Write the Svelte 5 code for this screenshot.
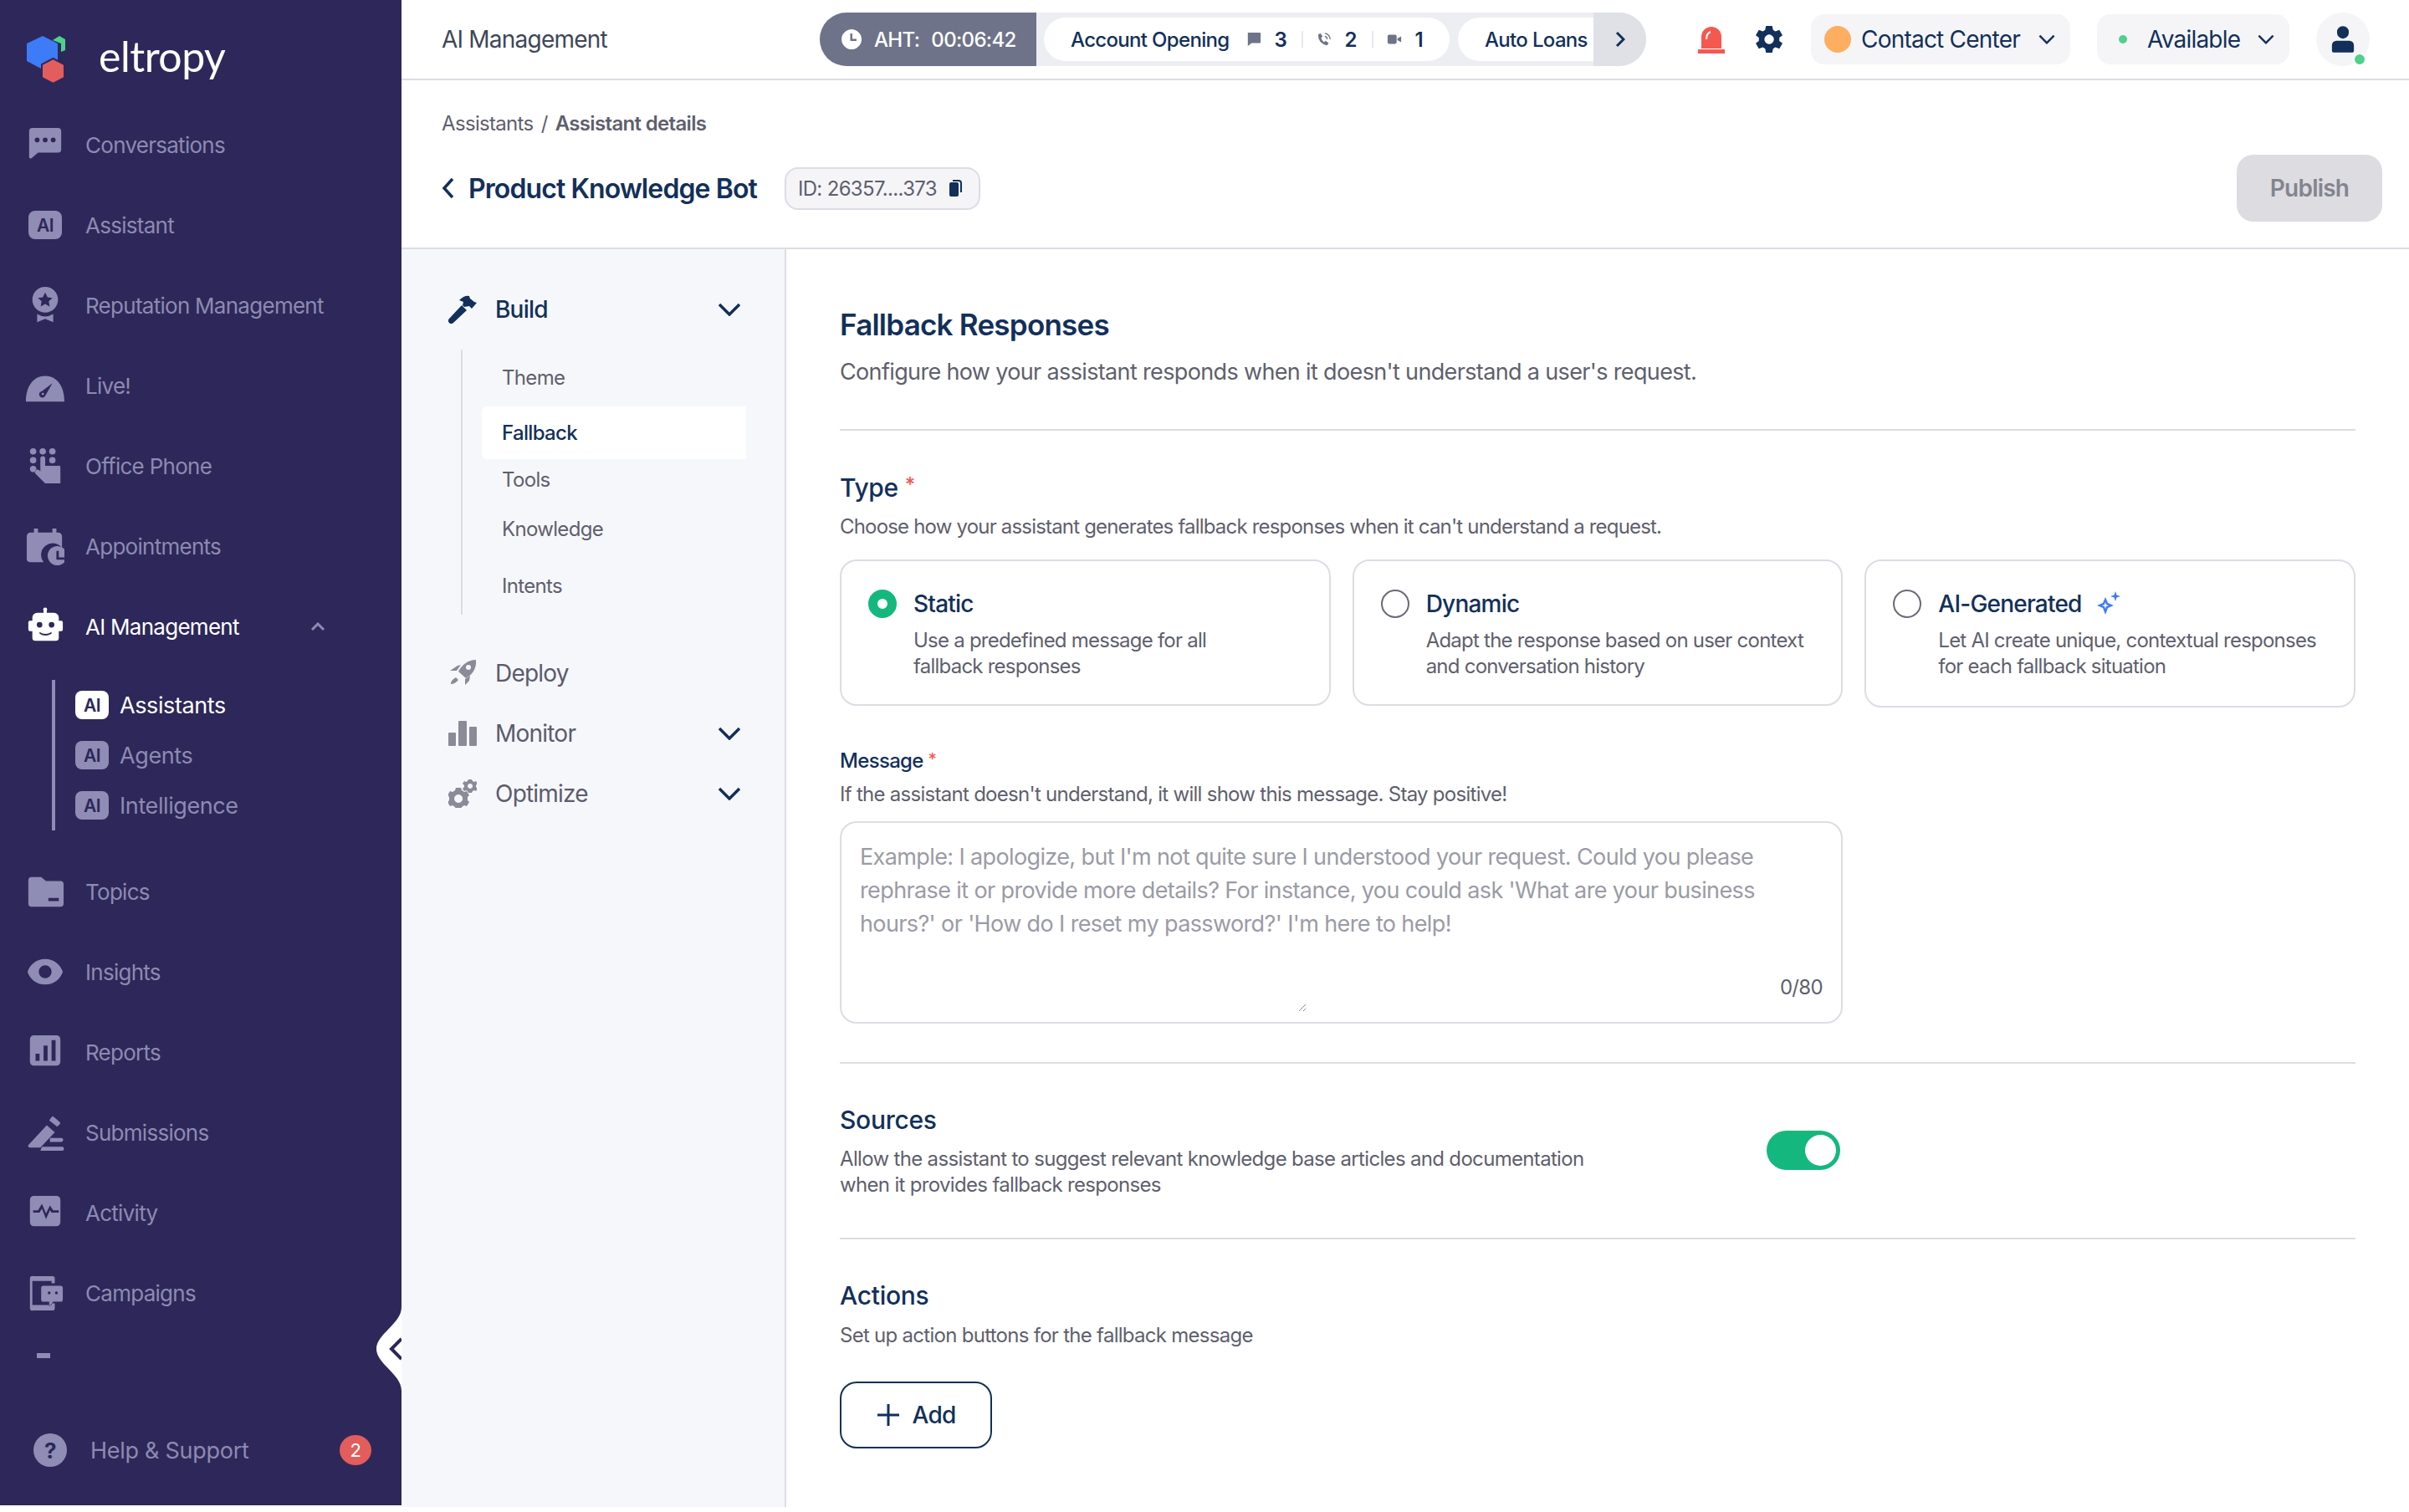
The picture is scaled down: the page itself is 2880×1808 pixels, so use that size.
<script>
  const circ = (x, y, r) => `M${x - r} ${y}a${r} ${r} 0 1 0 ${r * 2} 0a${r} ${r} 0 1 0 ${-r * 2} 0z`;

  const icons = {
    chat: `M8 3h32a4 4 0 0 1 4 4v23a4 4 0 0 1-4 4H15l-8 7a2 2 0 0 1-3-2V7a4 4 0 0 1 4-4z${circ(14, 18, 3)}${circ(24, 18, 3)}${circ(34, 18, 3)}`,
    award: `${circ(24, 17, 16)}M24 8l3 6 6 .8-4.500 4.300 1.100 6.400L24 22.500l-5.600 3 1.100-6.400-4.500-4.300 6-.8z M14 35q10 6 20 0v10l-10-4-10 4z`,
    live: `M0 44C0 24 10 12 24 12s24 12 24 32z M33 21L20 31a4 4 0 0 0-3 6 4 4 0 0 0 7 0zM21 33a1.500 1.500 0 1 0 .1 0z`,
    phone: `${circ(9, 6, 4)}${circ(21, 6, 4)}${circ(33, 6, 4)}${circ(9, 17, 4)}${circ(33, 17, 4)}${circ(9, 28, 4)}M18 15a3 3 0 0 1 6 0v9h16a2 2 0 0 1 3 2v20H24L12 34a3 3 0 0 1 5-4l1 1z`,
    calendar: `M8 7h2V2h5v5h18V2h5v5h2a5 5 0 0 1 5 5v14a14 14 0 0 0-23 18H5a4 4 0 0 1-4-4V12a5 5 0 0 1 5-5z M39 24a12 12 0 1 0 .1 0z M38 30h3v8h7v3H38z`,
    robot: `M22 2h4v5h9a6 6 0 0 1 6 6v4h3a2 2 0 0 1 2 2v9a2 2 0 0 1-2 2h-3v8a4 4 0 0 1-4 4H12a4 4 0 0 1-4-4v-8H5a2 2 0 0 1-2-2v-9a2 2 0 0 1 2-2h3v-4a6 6 0 0 1 6-6h8z${circ(17, 22, 3.500)}${circ(32, 22, 3.500)}M17 31q7 5 15 0v2q-8 5-15 0z`,
    folder: `M7 6h12l6 5h18a4 4 0 0 1 4 4v24a4 4 0 0 1-4 4H7a4 4 0 0 1-4-4V10a4 4 0 0 1 4-4z M28 32v4h13v-4z`,
    eye: `M24 8c11 0 19 7 22 16-3 9-11 16-22 16S5 33 2 24C5 15 13 8 24 8z${circ(24, 24, 8)}`,
    reports: `M10 3h28a5 5 0 0 1 5 5v28a5 5 0 0 1-5 5H10a5 5 0 0 1-5-5V8a5 5 0 0 1 5-5z M12 26v9h5v-9z M22 16v19h5V16z M32 9v26h5V9z`,
    gavel: `M26 15l10 9-18 19H5a2 2 0 0 1-2-3z M29 9l3-4a2 2 0 0 1 3 0l7 6a2 2 0 0 1 0 3l-3 3z M30 31h14a2.500 2.500 0 0 1 0 5H30z M20 42h25a2.500 2.500 0 0 1 0 5H18z`,
    pulse: `M10 3h28a5 5 0 0 1 5 5v28a5 5 0 0 1-5 5H10a5 5 0 0 1-5-5V8a5 5 0 0 1 5-5z M9 21v3h8l3-5 5 13 5-11 2 3h9v-3h-7l-4-6-5 10-5-12-5 8z`,
    campaign: `M9 3h24a3 3 0 0 1 3 3v6h-4V9H8v30h24v-2h4v6a3 3 0 0 1-3 3H9a3 3 0 0 1-4-3V6a3 3 0 0 1 4-3z M22 15h21a3 3 0 0 1 3 3v14a3 3 0 0 1-3 3h-9l-5 6v-6h-7a3 3 0 0 1-3-3V18a3 3 0 0 1 3-3z${circ(29, 24, 1.800)}${circ(38, 24, 1.800)}`
  };

  const nav_top = [
    { label: "Conversations", icon: "chat" },
    { label: "Assistant", badge: true },
    { label: "Reputation Management", icon: "award" },
    { label: "Live!", icon: "live" },
    { label: "Office Phone", icon: "phone" },
    { label: "Appointments", icon: "calendar" }
  ];
  const nav_sub = [
    { label: "Assistants", active: true },
    { label: "Agents" },
    { label: "Intelligence" }
  ];
  const nav_bottom = [
    { label: "Topics", icon: "folder" },
    { label: "Insights", icon: "eye" },
    { label: "Reports", icon: "reports" },
    { label: "Submissions", icon: "gavel" },
    { label: "Activity", icon: "pulse" },
    { label: "Campaigns", icon: "campaign" }
  ];

  const build_items = [
    { label: "Theme", cls: "theme" },
    { label: "Fallback", cls: "fallback" },
    { label: "Tools", cls: "tools" },
    { label: "Knowledge", cls: "knowledge" },
    { label: "Intents", cls: "intents" }
  ];

  const types = [
    { title: "Static", lines: ["Use a predefined message for all", "fallback responses"], selected: true },
    { title: "Dynamic", lines: ["Adapt the response based on user context", "and conversation history"] },
    { title: "AI-Generated", lines: ["Let AI create unique, contextual responses", "for each fallback situation"], spark: true }
  ];

  const placeholder = [
    "Example: I apologize, but I'm not quite sure I understood your request. Could you please",
    "rephrase it or provide more details? For instance, you could ask 'What are your business",
    "hours?' or 'How do I reset my password?' I'm here to help!"
  ];
</script>

{#snippet chevron(cls)}
  <svg class={cls} viewBox="0 0 28 16" fill="none"><path d="M2 2l12 12L26 2" /></svg>
{/snippet}

<div class="app">
  <aside class="sidebar">
    <div class="logo">
      <svg class="logo-mark" viewBox="0 0 46 57">
        <path d="M31 5l8-5 7 4v13l-5 2V9z" fill="#4fd08c" />
        <path d="M19 0l18 9v21L19 40 0 30V9z" fill="#3d7bf7" />
        <path d="M31.500 27L45 34v16l-13.500 7L18 50V34z" fill="#e25d5b" stroke="#2d2859" stroke-width="2" />
      </svg>
      <span class="logo-text">eltropy</span>
    </div>

    {#each nav_top as item}
      <div class="nav-item">
        <span class="nav-icon">
          {#if item.badge}
            <span class="ai-badge">AI</span>
          {:else}
            <svg viewBox="0 0 48 48"><path fill-rule="evenodd" d={icons[item.icon]} /></svg>
          {/if}
        </span>
        <span>{item.label}</span>
      </div>
    {/each}

    <div class="nav-item open">
      <span class="nav-icon">
        <svg viewBox="0 0 48 48"><circle cx="24" cy="3" r="2.500" /><path fill-rule="evenodd" d={icons.robot} /></svg>
      </span>
      <span>AI Management</span>
      <svg class="caret-up" viewBox="0 0 18 10" fill="none"><path d="M2 9l7-7 7 7" /></svg>
    </div>

    <div class="subnav">
      {#each nav_sub as item}
        <div class="sub-item" class:active={item.active}>
          <span class="ai-badge">AI</span>
          <span class="sub-label">{item.label}</span>
        </div>
      {/each}
    </div>

    {#each nav_bottom as item}
      <div class="nav-item">
        <span class="nav-icon">
          <svg viewBox="0 0 48 48"><path fill-rule="evenodd" d={icons[item.icon]} /></svg>
        </span>
        <span>{item.label}</span>
      </div>
    {/each}

    <div class="dash"></div>

    <div class="help">
      <span class="help-icon">?</span>
      <span class="help-label">Help &amp; Support</span>
      <span class="count">2</span>
    </div>

    <svg class="collapse" viewBox="0 0 30 100">
      <path d="M30 0C30 20 0 32 0 50s30 30 30 50z" fill="#fff" />
      <path d="M30 38L18 50l12 12" fill="none" stroke="#2d2859" stroke-width="4" />
    </svg>
  </aside>

  <main class="main">
    <header class="topbar">
      <div class="top-title">AI Management</div>

      <div class="queue">
        <div class="aht">
          <svg viewBox="0 0 24 24"><path fill-rule="evenodd" d="M12 0a12 12 0 1 0 .1 0z M10.500 5v9H18v-2.500h-5V5z" /></svg>
          <span>AHT:</span>
          <span>00:06:42</span>
        </div>
        <div class="queue-items">
          <div class="chip">
            <span class="chip-name">Account Opening</span>
            <svg class="mini" viewBox="0 0 20 20"><path d="M2 1h16a1 1 0 0 1 1 1v12a1 1 0 0 1-1 1H7l-5 4z" /></svg>
            <b>3</b>
            <i></i>
            <svg class="mini" viewBox="0 0 20 20"><path d="M5 2l3 4-2 2q1 4 4 6l2-2 4 3-2 3Q2 16 2 4z" /><path d="M11 2a8 8 0 0 1 7 8M11 6a4 4 0 0 1 3 4" fill="none" stroke="#6f7389" stroke-width="1.500" /></svg>
            <b>2</b>
            <i></i>
            <svg class="mini" viewBox="0 0 20 20"><rect x="1" y="4" width="12" height="12" rx="2" /><path d="M14 9l5-3v8l-5-3z" /></svg>
            <b>1</b>
          </div>
          <div class="chip clipped"><span class="chip-name">Auto Loans</span></div>
        </div>
        <div class="queue-next">
          <svg viewBox="0 0 12 20" fill="none"><path d="M2 2l8 8-8 8" /></svg>
        </div>
      </div>

      <svg class="alarm" viewBox="0 0 34 34">
        <path d="M5 28V14a12 12 0 0 1 24 0v14z" fill="#f4594f" />
        <rect x="1" y="29" width="32" height="5" fill="#f4594f" />
        <path d="M11 17q0-7 5-9" fill="none" stroke="#fff" stroke-width="2" />
      </svg>
      <svg class="gear" viewBox="0 0 34 34">
        <path fill-rule="evenodd" d="M13 0h8l1 5 3 2 5-2 4 7-4 3v4l4 3-4 7-5-2-3 2-1 5h-8l-1-5-3-2-5 2-4-7 4-3v-4l-4-3 4-7 5 2 3-2z M17 11a6 6 0 1 0 .1 0z" />
      </svg>

      <div class="select contact">
        <span class="org-dot"></span>
        <span>Contact Center</span>
        {@render chevron("sel-chev")}
      </div>
      <div class="select available">
        <span class="status-dot"></span>
        <span>Available</span>
        {@render chevron("sel-chev")}
      </div>

      <div class="avatar">
        <svg viewBox="0 0 32 36"><path fill-rule="evenodd" d="M16 0a8 8 0 0 1 8 9 8 8 0 0 1-16 0 8 8 0 0 1 8-9z M7 20h18a6 6 0 0 1 6 6v7a3 3 0 0 1-3 3H4a3 3 0 0 1-3-3v-7a6 6 0 0 1 6-6z" /></svg>
        <span class="avatar-dot"></span>
      </div>
    </header>

    <section class="page-head">
      <div class="crumbs">Assistants <span class="slash">/</span> <b>Assistant details</b></div>
      <div class="title-row">
        <svg class="back" viewBox="0 0 16 26" fill="none"><path d="M13 2L3 13l10 11" /></svg>
        <h1>Product Knowledge Bot</h1>
        <div class="id-chip">
          <span>ID: 26357....373</span>
          <svg viewBox="0 0 16 20"><path d="M1 5a2 2 0 0 1 2-2h7a2 2 0 0 1 2 2v13a2 2 0 0 1-2 2H3a2 2 0 0 1-2-2z" /><path d="M5 0h7a4 4 0 0 1 4 4v11h-2V4a2 2 0 0 0-2-2H5z" /></svg>
        </div>
        <button class="publish">Publish</button>
      </div>
    </section>

    <div class="body">
      <nav class="panel">
        <div class="panel-row build">
          <svg class="panel-icon" viewBox="0 0 34 34"><path d="M16 12l6 6L6 33a3 3 0 0 1-5-5z" /><path d="M13 6q6-6 12-5l1 3 5 4 3 1-6 7-3-3-6 1-2-2 1-4z" /></svg>
          <span>Build</span>
          {@render chevron("panel-chev")}
        </div>
        <div class="build-list">
          {#each build_items as item}
            <div class="build-item {item.cls}">{item.label}</div>
          {/each}
        </div>
        <div class="panel-row deploy">
          <svg class="panel-icon" viewBox="0 0 34 34"><path d="M33 1c1 11-5 18-12 22l-9-8C16 7 24 1 33 1z" /><circle cx="24" cy="10" r="3" fill="#f6f7fa" /><path d="M11 8l4-1-5 7H2zM20 24l6-4-1 6-5 5zM9 22l3 3q-4 5-9 5q0-5 6-8z" /></svg>
          <span>Deploy</span>
        </div>
        <div class="panel-row">
          <svg class="panel-icon" viewBox="0 0 34 34"><rect x="0" y="16" width="9" height="16" rx="1" /><rect x="12" y="2" width="10" height="30" rx="1" /><rect x="25" y="9" width="9" height="23" rx="1" /></svg>
          <span>Monitor</span>
          {@render chevron("panel-chev")}
        </div>
        <div class="panel-row">
          <svg class="panel-icon" viewBox="0 0 34 34"><path fill-rule="evenodd" d="M9 10h6l1 3 3 2 3-1 3 5-2 2v4l2 2-3 5-3-1-3 2-1 3H9l-1-3-3-2-3 1-3-5 2-2v-4l-2-2 3-5 3 1 3-2z M12 18a5 5 0 1 0 .1 0z" /><path fill-rule="evenodd" d="M24 0h4l1 2 2 1 2-1 2 3-2 2v2l2 2-2 3-2-1-2 1-1 2h-4l-1-2-2-1-2 1-2-3 2-2V7l-2-2 2-3 2 1 2-1z M26 5a3 3 0 1 0 .1 0z" /></svg>
          <span>Optimize</span>
          {@render chevron("panel-chev")}
        </div>
      </nav>

      <div class="content">
        <h2>Fallback Responses</h2>
        <p class="lead">Configure how your assistant responds when it doesn't understand a user's request.</p>
        <hr />

        <h3 class="type-h">Type <span class="req">*</span></h3>
        <p class="desc type-desc choose">Choose how your assistant generates fallback responses when it can't understand a request.</p>

        <div class="cards">
          {#each types as t}
            <div class="card" class:tall={t.spark}>
              <span class="radio" class:selected={t.selected}></span>
              <div class="card-text">
                <div class="card-title">
                  {t.title}
                  {#if t.spark}
                    <svg class="spark" viewBox="0 0 30 30"><path fill-rule="evenodd" d="M12 7l3 7 7 3-7 3-3 8-3-8-7-3 7-3z M12 13l-1 3-3 1 3 1 1 3 1-3 3-1-3-1z" /><path d="M24 0l1.500 4.500L30 6l-4.500 1.500L24 12l-1.500-4.500L18 6l4.500-1.500z" /></svg>
                  {/if}
                </div>
                {#each t.lines as line}
                  <div class="card-line">{line}</div>
                {/each}
              </div>
            </div>
          {/each}
        </div>

        <div class="msg-label">Message <span class="req small">*</span></div>
        <p class="desc msg-desc">If the assistant doesn't understand, it will show this message. Stay positive!</p>
        <div class="textarea">
          {#each placeholder as line}
            <div>{line}</div>
          {/each}
          <span class="counter">0/80</span>
          <svg class="grip" viewBox="0 0 10 10" fill="none"><path d="M1 9l8-8M6 9l3-3" /></svg>
        </div>
        <hr class="gap" />

        <div class="sources">
          <div>
            <h3>Sources</h3>
            <p class="desc two-line">Allow the assistant to suggest relevant knowledge base articles and documentation<br />when it provides fallback responses</p>
          </div>
          <span class="toggle"><span></span></span>
        </div>
        <hr class="gap second" />

        <h3 class="actions-h">Actions</h3>
        <p class="desc type-desc actions-desc">Set up action buttons for the fallback message</p>
        <button class="add">
          <svg viewBox="0 0 28 28" fill="none"><path d="M14 1v26M1 14h26" /></svg>
          Add
        </button>
      </div>
    </div>
  </main>
</div>

<style>
  :global(body) {
    margin: 0;
    background: #fff;
  }

  .app * {
    letter-spacing: -0.028em;
  }

  .app {
    display: flex;
    width: 2880px;
    height: 1808px;
    overflow: hidden;
    font-family: Inter, "Liberation Sans", sans-serif;
    color: #12305a;
  }

  .sidebar {
    position: relative;
    flex: none;
    width: 480px;
    height: 1800px;
    background: #2d2859;
    color: #8d8ab2;
    font-size: 26px;
  }

  .logo {
    display: flex;
    align-items: flex-start;
    height: 125px;
    padding: 43px 0 0 32px;
    box-sizing: border-box;
  }

  .logo-mark {
    width: 46px;
    height: 57px;
  }

  .logo-text {
    margin-left: 40px;
    margin-top: -6px;
    font-family: Lato, sans-serif;
    font-size: 50px;
    line-height: 60px;
    font-weight: 400;
    color: #fff;
    letter-spacing: -0.01em;
  }

  .nav-item {
    display: flex;
    align-items: center;
    height: 96px;
    padding-left: 30px;
  }

  .nav-icon {
    display: flex;
    align-items: center;
    justify-content: center;
    width: 48px;
    height: 48px;
    margin-right: 24px;
  }

  .nav-icon svg {
    width: 46px;
    height: 46px;
    fill: #8f8cb5;
  }

  .ai-badge {
    display: flex;
    align-items: center;
    justify-content: center;
    width: 40px;
    height: 34px;
    border-radius: 8px;
    background: #8f8cb5;
    color: #2d2859;
    font-size: 21px;
    font-weight: 600;
  }

  .open {
    color: #fff;
  }

  .open .nav-icon svg {
    fill: #fff;
  }

  .caret-up {
    width: 18px;
    height: 10px;
    margin-left: auto;
    margin-right: 91px;
    stroke: #8d8ab2;
    stroke-width: 3;
  }

  .subnav {
    margin: 16px 0 25px 62px;
    height: 180px;
    padding-left: 24px;
    border-left: 4px solid #8f8cb5;
  }

  .sub-item {
    display: flex;
    align-items: center;
    gap: 13px;
    height: 60px;
    font-size: 27px;
  }

  .sub-label {
    letter-spacing: -0.015em;
  }

  .sub-item.active {
    color: #fff;
  }

  .sub-item.active .ai-badge {
    background: #fff;
  }

  .dash {
    width: 16px;
    height: 6px;
    margin: 24px 0 0 44px;
    background: #8f8cb5;
  }

  .help {
    display: flex;
    align-items: center;
    height: 40px;
    margin-top: 90px;
    padding-left: 40px;
    font-size: 27px;
  }

  .help-label {
    letter-spacing: -0.01em;
  }

  .help-icon {
    display: flex;
    align-items: center;
    justify-content: center;
    width: 40px;
    height: 40px;
    margin-right: 28px;
    border-radius: 50%;
    background: #8f8cb5;
    color: #2d2859;
    font-size: 26px;
    font-weight: 700;
  }

  .count {
    display: flex;
    align-items: center;
    justify-content: center;
    width: 38px;
    height: 36px;
    margin-left: auto;
    margin-right: 36px;
    border-radius: 50%;
    background: #e25d5b;
    color: #fff;
    font-size: 22px;
  }

  .collapse {
    position: absolute;
    right: 0;
    top: 1563px;
    width: 30px;
    height: 100px;
  }

  .main {
    flex: 1;
    min-width: 0;
    display: flex;
    flex-direction: column;
  }

  .topbar {
    display: flex;
    align-items: center;
    flex: none;
    height: 94px;
    border-bottom: 2px solid #dcdce4;
  }

  .top-title {
    width: 500px;
    padding-left: 48px;
    box-sizing: border-box;
    font-size: 28px;
    color: #3e4759;
  }

  .queue {
    display: flex;
    width: 988px;
    height: 64px;
    border-radius: 32px;
    overflow: hidden;
    background: #eceef2;
    font-size: 24px;
    font-weight: 500;
  }

  .aht {
    display: flex;
    align-items: center;
    flex: none;
    width: 259px;
    padding-left: 26px;
    box-sizing: border-box;
    background: #6f7389;
    color: #fff;
  }

  .aht svg {
    width: 24px;
    height: 24px;
    margin-right: 15px;
    fill: #fff;
  }

  .aht span + span {
    margin-left: 14px;
  }

  .queue-items {
    display: flex;
    flex: 1;
    gap: 10px;
    align-items: center;
    padding-left: 9px;
    min-width: 0;
  }

  .chip {
    display: flex;
    align-items: center;
    height: 52px;
    background: #fff;
    border-radius: 26px;
    padding-left: 32px;
    box-sizing: border-box;
    white-space: nowrap;
  }

  .chip:first-child {
    flex: none;
    width: 485px;
  }

  .chip.clipped {
    flex: 1;
    border-radius: 26px 0 0 26px;
  }

  .chip b {
    width: 16px;
    font-weight: 600;
  }

  .chip i {
    width: 2px;
    height: 20px;
    margin: 0 16px;
    background: #e6e7ec;
  }

  .chip-name {
    margin-right: 20px;
  }

  .mini {
    width: 18px;
    height: 18px;
    margin-right: 16px;
    fill: #6f7389;
  }

  .queue-next {
    display: flex;
    align-items: center;
    justify-content: center;
    flex: none;
    width: 63px;
    background: #dfe1e7;
  }

  .queue-next svg {
    width: 12px;
    height: 20px;
    stroke: #12305a;
    stroke-width: 3;
  }

  .alarm {
    width: 34px;
    height: 34px;
    margin-left: 61px;
  }

  .gear {
    width: 32px;
    height: 32px;
    margin-left: 36px;
    fill: #12305a;
  }

  .select {
    display: flex;
    align-items: center;
    height: 60px;
    border-radius: 16px;
    background: #f5f5f8;
    font-size: 28px;
    box-sizing: border-box;
  }

  .contact {
    width: 310px;
    margin-left: 34px;
    padding-left: 16px;
  }

  .org-dot {
    width: 32px;
    height: 32px;
    margin-right: 12px;
    border-radius: 50%;
    background: #fdae61;
  }

  .available {
    width: 230px;
    margin-left: 32px;
    padding-left: 26px;
  }

  .status-dot {
    width: 10px;
    height: 10px;
    margin-right: 24px;
    border-radius: 50%;
    background: #4fd08c;
  }

  .sel-chev {
    width: 20px;
    height: 12px;
    margin-left: auto;
    margin-right: 18px;
    stroke: #12305a;
    stroke-width: 3.500;
  }

  .avatar {
    position: relative;
    display: flex;
    align-items: center;
    justify-content: center;
    width: 64px;
    height: 64px;
    margin-left: 32px;
    border-radius: 50%;
    background: #f5f5f8;
  }

  .avatar svg {
    width: 28px;
    height: 32px;
    fill: #12305a;
  }

  .avatar-dot {
    position: absolute;
    right: 4px;
    bottom: 0;
    width: 12px;
    height: 12px;
    border-radius: 50%;
    background: #4fd08c;
    border: 2px solid #fff;
  }

  .page-head {
    flex: none;
    height: 202px;
    padding: 36px 32px 0 48px;
    box-sizing: border-box;
    border-bottom: 2px solid #dcdce4;
  }

  .crumbs {
    height: 32px;
    line-height: 32px;
    font-size: 24px;
    color: #5f5f6e;
  }

  .crumbs b {
    font-weight: 600;
  }

  .slash {
    margin: 0 3px;
  }

  .title-row {
    display: flex;
    align-items: center;
    height: 80px;
    margin-top: 21px;
  }

  .back {
    width: 16px;
    height: 26px;
    margin-right: 16px;
    stroke: #12305a;
    stroke-width: 3.500;
  }

  .title-row h1 {
    margin: 0;
    font-size: 32px;
    font-weight: 600;
  }

  .id-chip {
    display: flex;
    align-items: center;
    height: 51px;
    margin-left: 33px;
    padding: 0 14px;
    box-sizing: border-box;
    width: 234px;
    background: #f5f5f8;
    border: 2px solid #dcdce4;
    border-radius: 16px;
    font-size: 24px;
    color: #5f5f6e;
  }

  .id-chip svg {
    width: 16px;
    height: 20px;
    margin-left: auto;
    margin-right: 6px;
    fill: #12305a;
  }

  .publish {
    width: 174px;
    height: 80px;
    margin-left: auto;
    border: 0;
    border-radius: 20px;
    background: #dcdce1;
    color: #84848f;
    font: 600 28px Inter, "Liberation Sans", sans-serif;
  }

  .body {
    display: flex;
    flex: 1;
    min-height: 0;
  }

  .panel {
    flex: none;
    width: 460px;
    height: 1504px;
    padding: 44px 52px 0 56px;
    box-sizing: border-box;
    background: #f6f7fa;
    border-right: 2px solid #dcdce4;
  }

  .panel-row {
    display: flex;
    align-items: center;
    height: 72px;
    font-size: 28px;
    color: #5b5b6e;
  }

  .panel-row.build {
    height: 56px;
    color: #12305a;
    font-weight: 500;
  }

  .panel-icon {
    width: 34px;
    height: 34px;
    margin-right: 22px;
    fill: #8b8b98;
  }

  .build .panel-icon {
    fill: #12305a;
  }

  .panel-chev {
    width: 28px;
    height: 16px;
    margin-left: auto;
    stroke: #12305a;
    stroke-width: 3.500;
  }

  .build-list {
    height: 317px;
    margin: 20px 0 34px 15px;
    padding-top: 6px;
    box-sizing: border-box;
    border-left: 2px solid #dcdce4;
  }

  .build-item {
    display: flex;
    align-items: center;
    margin-left: 23px;
    padding-left: 24px;
    width: 316px;
    box-sizing: border-box;
    font-size: 24px;
    color: #5f5f6e;
  }

  .theme {
    height: 54px;
    margin-bottom: 8px;
  }

  .fallback {
    height: 63px;
    background: #fff;
    border-radius: 6px 0 0 6px;
    color: #12305a;
    font-weight: 500;
  }

  .tools {
    height: 48px;
  }

  .knowledge {
    height: 70px;
  }

  .intents {
    height: 66px;
  }

  .content {
    flex: 1;
    min-width: 0;
    padding: 68px 64px 0;
  }

  .content h2 {
    margin: 0;
    font-size: 35px;
    line-height: 44px;
    font-weight: 600;
    letter-spacing: -0.022em;
  }

  .lead {
    margin: 17px 0 0;
    font-size: 27px;
    line-height: 36px;
    color: #5f5f6e;
    letter-spacing: -0.024em;
  }

  hr {
    height: 2px;
    margin: 50px 0 0;
    border: 0;
    background: #dcdce4;
  }

  hr.gap {
    margin-top: 46px;
  }

  hr.second {
    margin-top: 48px;
  }

  .content h3 {
    margin: 47px 0 0;
    font-size: 30px;
    line-height: 40px;
    font-weight: 500;
    letter-spacing: -0.01em;
  }

  .content h3.type-h {
    margin-top: 45px;
  }

  .req {
    color: #f4594f;
    font-size: 24px;
    vertical-align: 6px;
  }

  .req.small {
    font-size: 20px;
    vertical-align: 3px;
  }

  .desc {
    margin: 0;
    font-size: 24px;
    color: #5f5f6e;
    letter-spacing: -0.03em;
  }

  .type-desc {
    margin-top: 11px;
    line-height: 32px;
  }

  .choose {
    letter-spacing: -0.034em;
  }

  .actions-desc {
    margin-top: 12px;
  }

  .cards {
    display: grid;
    grid-template-columns: repeat(3, minmax(0, 1fr));
    gap: 26px;
    align-items: start;
    margin-top: 23px;
  }

  .card {
    display: flex;
    gap: 20px;
    height: 175px;
    padding: 34px 32px 0;
    box-sizing: border-box;
    border: 2px solid #dcdce4;
    border-radius: 20px;
  }

  .card.tall {
    height: 177px;
  }

  .radio {
    flex: none;
    width: 34px;
    height: 34px;
    box-sizing: border-box;
    border: 2px solid #6a6a78;
    border-radius: 50%;
    background: #fff;
  }

  .radio.selected {
    border: 11px solid #14b87e;
  }

  .card-title {
    display: flex;
    align-items: center;
    height: 34px;
    margin-bottom: 11px;
    font-size: 28px;
    font-weight: 500;
  }

  .spark {
    width: 30px;
    height: 30px;
    margin-left: 16px;
    fill: #3d7bf7;
  }

  .card-line {
    font-size: 24px;
    line-height: 31px;
    color: #5f5f6e;
    white-space: nowrap;
    letter-spacing: -0.032em;
  }

  .msg-label {
    margin-top: 47px;
    font-size: 24px;
    line-height: 30px;
    font-weight: 500;
  }

  .msg-desc {
    margin-top: 10px;
    line-height: 30px;
  }

  .textarea {
    position: relative;
    width: 1199px;
    height: 242px;
    margin-top: 17px;
    padding: 21px 22px 0;
    box-sizing: border-box;
    border: 2px solid #dcdce4;
    border-radius: 20px;
    font-size: 27px;
    line-height: 40px;
    color: #9b9ba6;
    white-space: nowrap;
  }

  .textarea div {
    letter-spacing: -0.023em;
  }

  .counter {
    position: absolute;
    right: 22px;
    top: 181px;
    font-size: 24px;
    line-height: 32px;
    color: #5f5f6e;
  }

  .grip {
    position: absolute;
    left: 546px;
    top: 216px;
    width: 10px;
    height: 10px;
    stroke: #8b8b98;
    stroke-width: 1;
  }

  .sources {
    display: flex;
    align-items: center;
    justify-content: space-between;
    width: 1199px;
    margin-top: 47px;
  }

  .sources h3 {
    margin: 0;
  }

  .two-line {
    margin-top: 11px;
    line-height: 31px;
    letter-spacing: -0.028em;
  }

  .toggle {
    display: flex;
    align-items: center;
    justify-content: flex-end;
    width: 88px;
    height: 47px;
    margin-right: 3px;
    padding: 0 5px;
    box-sizing: border-box;
    border-radius: 24px;
    background: #14b87e;
  }

  .toggle span {
    width: 37px;
    height: 37px;
    border-radius: 50%;
    background: #fff;
  }

  .add {
    display: flex;
    align-items: center;
    justify-content: center;
    gap: 15px;
    width: 182px;
    height: 80px;
    margin-top: 39px;
    background: #fff;
    border: 2px solid #12305a;
    border-radius: 20px;
    color: #12305a;
    font: 500 28px Inter, "Liberation Sans", sans-serif;
  }

  .add svg {
    width: 28px;
    height: 28px;
    stroke: #12305a;
    stroke-width: 3;
  }
</style>
